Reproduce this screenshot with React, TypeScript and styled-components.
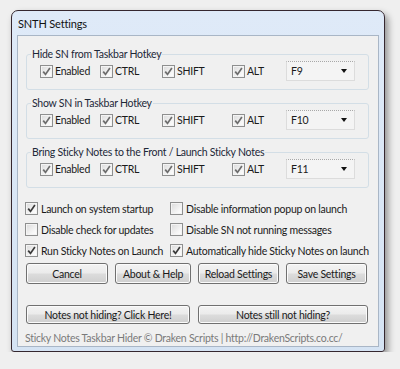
import React from "react";
import styled, { createGlobalStyle } from "styled-components";

const Global = createGlobalStyle`
  html, body { margin: 0; padding: 0; background: #efefef; }
  body { font-family: Lato, "Liberation Sans", sans-serif; font-size: 10.5px; letter-spacing: -0.25px; color: #1b1b1b; }
  * { box-sizing: border-box; }
`;

const Win = styled.div`
  margin: 10px 0 0 11px;
  width: 374px;
  height: 342px;
  border: 1px solid #35272f;
  border-radius: 7px 7px 3px 3px;
  background: linear-gradient(#dfeaf8, #d5e3f3);
  box-shadow: 3px 4px 7px rgba(0, 0, 0, 0.4);
  display: flex;
  flex-direction: column;
`;

const TitleBar = styled.div`
  height: 25px;
  padding: 1px 0 0 6px;
  display: flex;
  align-items: center;
  font-size: 11px;
  letter-spacing: -0.15px;
  color: #111;
`;

const Client = styled.div`
  flex: 1;
  margin: 0 5px 4px 5px;
  border: 1px solid #a9b6c6;
  background: #f0f0f0;
  padding: 11px 9px 0 8px;
  display: flex;
  flex-direction: column;
`;

const Group = styled.fieldset`
  margin: 0;
  margin-top: ${(p: { $first?: boolean }) => (p.$first ? "0" : "6px")};
  padding: 0 0 8px 4px;
  min-width: 0;
  border: 1px solid #d3dee6;
  border-radius: 3px;
`;

const Legend = styled.legend`
  padding: 0 1px;
  line-height: 14px;
  color: #1d2838;
`;

const HotkeyRow = styled.div`
  display: grid;
  grid-template-columns: 60px 62px 70px 54px 69px;
  align-items: center;
  height: 20px;
  margin-left: 9px;
`;

const CheckLabel = styled.label<{ $gap: number }>`
  display: flex;
  align-items: center;
  gap: ${(p) => p.$gap}px;
  white-space: nowrap;
  color: #1a1a1a;
`;

const Box = styled.span`
  width: 13px;
  height: 13px;
  flex: none;
  border: 1px solid #8e8f8f;
  background: linear-gradient(135deg, #dadada, #f7f7f7 70%, #ffffff);
  box-shadow: inset 0 0 0 1px #f4f4f4;
  display: flex;
  align-items: center;
  justify-content: center;
`;

const Select = styled.div`
  height: 20px;
  border: 1px solid #dcdcdc;
  border-top: 1px dotted #a8a8a8;
  background: #f4f4f4;
  display: flex;
  align-items: center;
  justify-content: space-between;
  padding: 0 7px 0 4px;
  color: #1a1a1a;
`;

const Arrow = styled.span`
  width: 0;
  height: 0;
  border-left: 3.5px solid transparent;
  border-right: 3.5px solid transparent;
  border-top: 4px solid #111;
`;

const Options = styled.div`
  margin: 10px 0 0 -1px;
  display: grid;
  grid-template-columns: 145px 1fr;
  grid-auto-rows: 21px;
  align-items: center;
`;

const ButtonRow = styled.div<{ $cols: string; $top: number; $h: number }>`
  margin-top: ${(p) => p.$top}px;
  display: grid;
  grid-template-columns: ${(p) => p.$cols};
  column-gap: ${(p) => (p.$cols.split(" ").length > 2 ? 7 : 8)}px;
  height: ${(p) => p.$h}px;
`;

const Button = styled.button`
  font: inherit;
  letter-spacing: inherit;
  white-space: nowrap;
  color: #1a1a1a;
  border: 1px solid #707070;
  border-radius: 3px;
  padding: 0;
  background: linear-gradient(#f3f3f3 0%, #ebebeb 48%, #dcdcdc 52%, #cfcfcf 100%);
  box-shadow: inset 0 0 0 1px #fbfbfb;
  display: flex;
  align-items: center;
  justify-content: center;
`;

const Footer = styled.div`
  margin: 6px 0 0 -1px;
  line-height: 16px;
  color: #7a7a7a;
  white-space: nowrap;
`;

const Check = ({ dark }: { dark?: boolean }) => (
  <svg width="9" height="9" viewBox="0 0 9 9">
    <path
      d="M1.2 4.6 L3.5 7.4 L7.9 0.9"
      fill="none"
      stroke={dark ? "#3a3a3a" : "#6d6d6d"}
      strokeWidth="1.7"
    />
  </svg>
);

const CheckBox = ({
  label,
  checked = true,
  dark,
  gap = 2,
}: {
  label: string;
  checked?: boolean;
  dark?: boolean;
  gap?: number;
}) => (
  <CheckLabel $gap={gap}>
    <Box>{checked && <Check dark={dark} />}</Box>
    {label}
  </CheckLabel>
);

const hotkeys = [
  { title: "Hide SN from Taskbar Hotkey", key: "F9" },
  { title: "Show SN in Taskbar Hotkey", key: "F10" },
  { title: "Bring Sticky Notes to the Front / Launch Sticky Notes", key: "F11" },
];

const options: [string, boolean][] = [
  ["Launch on system startup", true],
  ["Disable information popup on launch", false],
  ["Disable check for updates", false],
  ["Disable SN not running messages", false],
  ["Run Sticky Notes on Launch", true],
  ["Automatically hide Sticky Notes on launch", true],
];

export default function App() {
  return (
    <>
      <Global />
      <Win>
        <TitleBar>SNTH Settings</TitleBar>
        <Client>
          {hotkeys.map((h, i) => (
            <Group key={h.key} $first={i === 0}>
              <Legend>{h.title}</Legend>
              <HotkeyRow>
                <CheckBox label="Enabled" />
                <CheckBox label="CTRL" />
                <CheckBox label="SHIFT" />
                <CheckBox label="ALT" />
                <Select>
                  <span>{h.key}</span>
                  <Arrow />
                </Select>
              </HotkeyRow>
            </Group>
          ))}
          <Options>
            {options.map(([l, c]) => (
              <CheckBox key={l} label={l} checked={c} dark gap={3} />
            ))}
          </Options>
          <ButtonRow $cols="82px 76px 81px 81px" $top={2} $h={21}>
            <Button>Cancel</Button>
            <Button>About &amp; Help</Button>
            <Button>Reload Settings</Button>
            <Button>Save Settings</Button>
          </ButtonRow>
          <ButtonRow $cols="164px 170px" $top={21} $h={19}>
            <Button>Notes not hiding? Click Here!</Button>
            <Button>Notes still not hiding?</Button>
          </ButtonRow>
          <Footer>
            Sticky Notes Taskbar Hider © Draken Scripts | http://DrakenScripts.co.cc/
          </Footer>
        </Client>
      </Win>
    </>
  );
}
